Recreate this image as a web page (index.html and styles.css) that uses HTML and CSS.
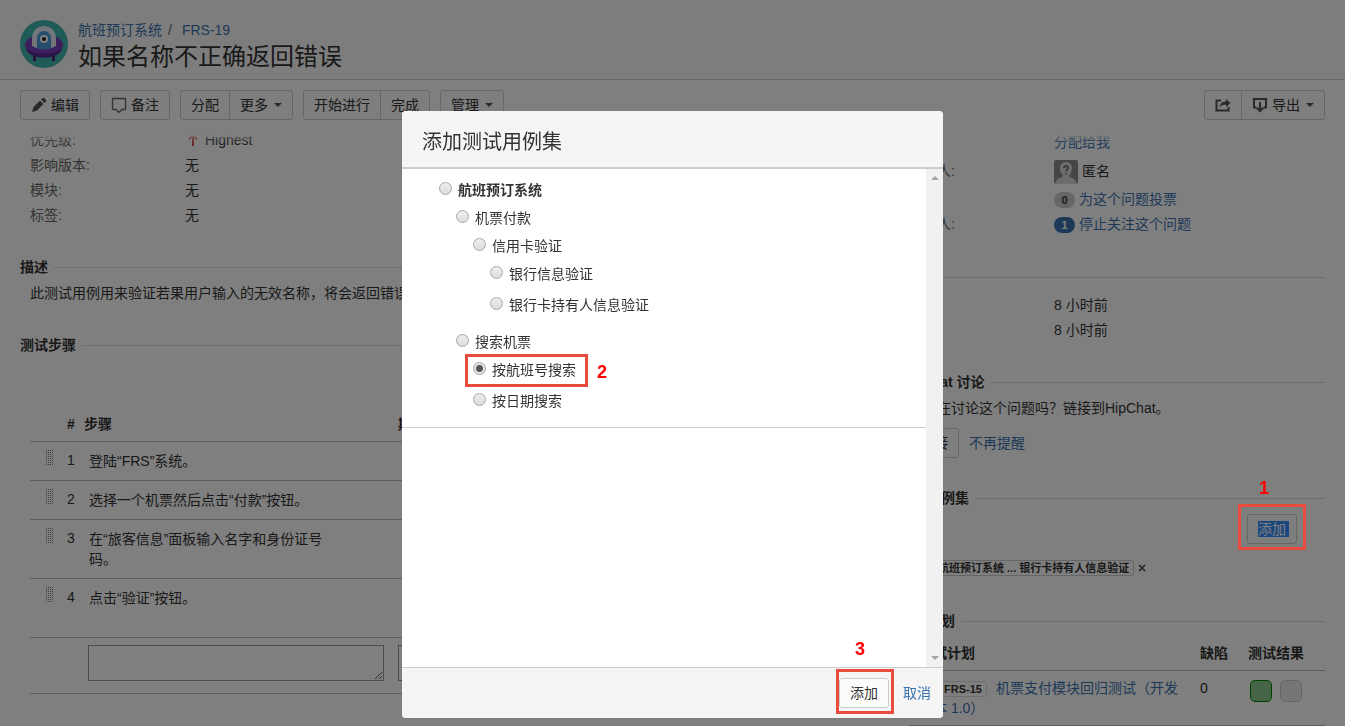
FILE: index.html
```html
<!DOCTYPE html>
<html lang="zh-CN">
<head>
  <meta charset="UTF-8" />
  <meta name="viewport" content="width=device-width, initial-scale=1.0"/>
  <title>FRS-19 如果名称不正确返回错误</title>
  <link rel="stylesheet" href="styles.css">
</head>
<body>

  <header class="issue-header">
    <svg class="project-avatar" viewBox="0 0 48 48" width="48" height="48">
      <circle cx="24" cy="24" r="24" fill="#3fb8b0"/>
      <path d="M13 35h3v6h-3zM32 35h3v6h-3z" fill="#4b2080"/>
      <ellipse cx="24" cy="25" rx="19" ry="10.500" fill="#7b3fc0"/>
      <path d="M5.500 28c3 13 34 13 37 0-6 7-31 7-37 0z" fill="#5a2896"/>
      <path d="M12 26V18a12 12 0 0 1 24 0v8c-5 4-19 4-24 0z" fill="#e4ecf4"/>
      <path d="M17 28V18a7 7 0 0 1 14 0v10c-4 2-10 2-14 0z" fill="#4f9bd8"/>
      <circle cx="24" cy="19" r="4" fill="#fff"/>
      <circle cx="24" cy="19" r="2" fill="#222"/>
    </svg>
    <div>
      <nav class="breadcrumbs"><a href="#">航班预订系统</a><span>/</span><a href="#">FRS-19</a></nav>
      <h1>如果名称不正确返回错误</h1>
    </div>
  </header>

  <div class="toolbar">
    <div class="btn-group">
      <button class="btn"><svg class="icon" viewBox="0 0 16 16" width="16" height="16"><path d="M1 15l1.500-5 6.500-6.500 3.500 3.500L6 13.500zM10 2.500l1.300-1.300q1-1 2 0l1.500 1.500q1 1 0 2L13.500 6z" fill="#555"/></svg>编辑</button>
    </div>
    <div class="btn-group">
      <button class="btn"><svg class="icon" viewBox="0 0 16 16" width="16" height="16"><path d="M2 1.500h12q.500 0 .5.500v10q0 .500-.5.500h-3l-3 3-3-3H2q-.500 0-.5-.500V2q0-.500.500-.500z" fill="none" stroke="#666" stroke-width="1.300"/></svg>备注</button>
    </div>
    <div class="btn-group">
      <button class="btn">分配</button>
      <button class="btn">更多<span class="caret"></span></button>
    </div>
    <div class="btn-group">
      <button class="btn">开始进行</button>
      <button class="btn">完成</button>
    </div>
    <div class="btn-group">
      <button class="btn">管理<span class="caret"></span></button>
    </div>
    <div class="btn-group push-right">
      <button class="btn" aria-label="分享"><svg viewBox="0 0 16 16" width="16" height="16"><path d="M6 3.500H1.500v10h12V10" fill="none" stroke="#555" stroke-width="2"/><path d="M4.500 10.500C5 6.500 7.500 4.500 11 4.500V2l4.500 4L11 10V7.500c-3 0-5 1-6.500 3z" fill="#555"/></svg></button>
      <button class="btn"><svg class="icon" viewBox="0 0 16 16" width="16" height="16"><path d="M4 10.500H2V2h12v8.500h-2" fill="none" stroke="#555" stroke-width="2"/><path d="M8 5v8M4.500 10.500L8 14l3.500-3.500" fill="none" stroke="#555" stroke-width="2"/></svg>导出<span class="caret"></span></button>
    </div>
  </div>

  <main class="issue-body">
    <div class="main-column">
      <dl class="fields">
        <dt>优先级:</dt>
        <dd><svg class="priority" viewBox="0 0 10 14" width="16" height="14"><path d="M5 13V2M1 6l4-4 4 4" fill="none" stroke="#d04437" stroke-width="2"/></svg>Highest</dd>
        <dt>影响版本:</dt><dd>无</dd>
        <dt>模块:</dt><dd>无</dd>
        <dt>标签:</dt><dd>无</dd>
      </dl>

      <section class="module">
        <h2>描述</h2>
        <p>此测试用例用来验证若果用户输入的无效名称，将会返回错误。</p>
      </section>

      <section class="module">
        <h2>测试步骤</h2>
        <table class="steps">
          <colgroup><col class="col-drag"><col class="col-num"><col class="col-step"><col></colgroup>
          <thead>
            <tr><th></th><th class="num">#</th><th>步骤</th><th class="expected">期望结果</th></tr>
          </thead>
          <tbody>
            <tr><td><span class="drag"></span></td><td class="num">1</td><td class="text"><p>登陆“FRS”系统。</p></td><td></td></tr>
            <tr><td><span class="drag"></span></td><td class="num">2</td><td class="text"><p>选择一个机票然后点击“付款”按钮。</p></td><td></td></tr>
            <tr><td><span class="drag"></span></td><td class="num">3</td><td class="text"><p>在“旅客信息”面板输入名字和身份证号码。</p></td><td></td></tr>
            <tr class="last-step"><td><span class="drag"></span></td><td class="num">4</td><td class="text"><p>点击“验证”按钮。</p></td><td></td></tr>
            <tr class="new-step"><td></td><td></td><td><textarea aria-label="步骤"></textarea></td><td><textarea aria-label="期望结果"></textarea></td></tr>
          </tbody>
        </table>
      </section>
    </div>

    <aside class="side-column">
      <dl class="people">
        <dt></dt><dd class="assign"><a href="#">分配给我</a></dd>
        <dt>报告人:</dt>
        <dd class="reporter">
          <svg viewBox="0 0 24 24" width="24" height="24">
            <rect width="24" height="24" rx="2" fill="#8c8c8c"/>
            <path d="M12 2c4 0 6 3 6 6 0 4-2 6-3 8 1 2 7 2 8 8H1c1-6 7-6 8-8-1-2-3-4-3-8 0-3 2-6 6-6z" fill="#d8d8d8"/>
            <path d="M10 8q0-2 2-2t2 2q0 1-1 1.600-1 .6-1 1.800M12 13v1.600" fill="none" stroke="#666" stroke-width="1.500"/>
          </svg>匿名
        </dd>
        <dt>投票:</dt><dd><span class="badge">0</span><a href="#">为这个问题投票</a></dd>
        <dt>关注人:</dt><dd><span class="badge active">1</span><a href="#">停止关注这个问题</a></dd>
      </dl>

      <section class="module">
        <h2>日期</h2>
        <dl class="people dates">
          <dt>创建:</dt><dd>8 小时前</dd>
          <dt>更新:</dt><dd>8 小时前</dd>
        </dl>
      </section>

      <section class="module">
        <h2>HipChat 讨论</h2>
        <p>您正在讨论这个问题吗？链接到HipChat。</p>
        <div class="actions"><button class="btn">连接</button><a href="#">不再提醒</a></div>
      </section>

      <section class="module">
        <h2>测试用例集</h2>
        <div class="add-suite">
          <div class="marked">
            <button class="btn"><span class="selected">添加</span></button>
            <span class="marker marker-1"><b>1</b></span>
          </div>
        </div>
        <div class="suite"><span class="suite-tag">航班预订系统 ... 银行卡持有人信息验证</span><button class="remove" aria-label="移除"><svg viewBox="0 0 8 8" width="8" height="8"><path d="M1 1l6 6M7 1L1 7" stroke="#444" stroke-width="1.500"/></svg></button></div>
      </section>

      <section class="module">
        <h2>测试计划</h2>
        <table class="plans">
          <colgroup><col><col class="col-defect"><col class="col-result"></colgroup>
          <thead><tr><th>测试计划</th><th>缺陷</th><th>测试结果</th></tr></thead>
          <tbody>
            <tr>
              <td><span class="plan-icon"></span><span class="key">FRS-15</span><a href="#">机票支付模块回归测试（开发版本 1.0）</a></td>
              <td>0</td>
              <td><div class="results"><span class="result pass"></span><span class="result"></span></div></td>
            </tr>
          </tbody>
        </table>
      </section>
    </aside>
  </main>

  <div class="blanket"></div>

  <!-- Add test suite dialog -->
  <div class="dialog-wrap">
    <form class="dialog" role="dialog" aria-labelledby="dialogTitle">
      <h2 id="dialogTitle">添加测试用例集</h2>
      <div class="dialog-content">
        <ul class="tree">
          <li>
            <label class="root"><input type="radio" name="suite">航班预订系统</label>
            <ul>
              <li>
                <label><input type="radio" name="suite">机票付款</label>
                <ul>
                  <li>
                    <label><input type="radio" name="suite">信用卡验证</label>
                    <ul class="leaves">
                      <li><label><input type="radio" name="suite">银行信息验证</label></li>
                      <li><label><input type="radio" name="suite">银行卡持有人信息验证</label></li>
                    </ul>
                  </li>
                </ul>
              </li>
              <li>
                <label><input type="radio" name="suite">搜索机票</label>
                <ul class="leaves">
                  <li><label class="marked"><input type="radio" name="suite" checked>按航班号搜索<span class="marker marker-2"><b>2</b></span></label></li>
                  <li><label><input type="radio" name="suite">按日期搜索</label></li>
                </ul>
              </li>
            </ul>
          </li>
        </ul>
        <div class="scrollbar"><span class="arrow up"></span><span class="arrow down"></span></div>
      </div>
      <div class="dialog-footer">
        <div class="marked">
          <button class="btn" type="button">添加</button>
          <span class="marker marker-3"><b>3</b></span>
        </div>
        <a href="#">取消</a>
      </div>
    </form>
  </div>

</body>
</html>
```
FILE: styles.css
```css
* { box-sizing: border-box; margin: 0; padding: 0; }

body {
  height: 100vh;
  display: flex;
  flex-direction: column;
  overflow: hidden;
  background: #fff;
  color: #333;
  font-family: "Liberation Sans", "Noto Sans CJK SC", sans-serif;
  font-size: 14px;
  line-height: 20px;
}

a { color: #3b73af; text-decoration: none; }
ul { list-style: none; }
button, input, textarea { font: inherit; color: inherit; }

/* Header */
.issue-header {
  display: flex;
  gap: 10px;
  padding: 20px 20px 11px;
  background: #fafafa;
  border-bottom: 1px solid #ccc;
}

.breadcrumbs span { margin: 0 10px 0 6px; color: #666; }

.issue-header h1 {
  font-size: 24px;
  font-weight: normal;
  line-height: 28px;
  margin-top: 3px;
  height: 25px;
}

.issue-header svg { flex: none; }

/* Toolbar */
.toolbar {
  display: flex;
  gap: 10px;
  padding: 10px 20px 8px;
  background: #fff;
  position: relative;
}

.toolbar::after {
  content: "";
  position: absolute;
  left: 0;
  right: 0;
  top: 100%;
  height: 18px;
  background: linear-gradient(#fff 40%, rgba(255, 255, 255, 0.3) 60%, rgba(255, 255, 255, 0));
}

.btn-group { display: flex; }
.push-right { margin-left: auto; }

.btn {
  height: 30px;
  padding: 0 10px;
  border: 1px solid #ccc;
  border-radius: 3px;
  background: #fcfcfc;
  display: inline-flex;
  align-items: center;
  white-space: nowrap;
  cursor: pointer;
}

.btn:hover { border-color: #999; }
.btn .icon { margin-right: 4px; }
.btn-group .btn + .btn { margin-left: -1px; border-radius: 0 3px 3px 0; }
.btn-group .btn:first-child:not(:last-child) { border-radius: 3px 0 0 3px; }

.caret {
  margin-left: 6px;
  border: 4px solid transparent;
  border-top-color: #555;
  border-bottom: 0;
}

/* Issue body */
.issue-body {
  flex: 1;
  min-height: 0;
  overflow: hidden;
  display: grid;
  grid-template-columns: 2fr 1fr;
  gap: 27px;
  padding: 0 20px;
}

.main-column, .side-column { min-width: 0; }

.fields {
  display: grid;
  grid-template-columns: 155px 1fr;
  padding-left: 10px;
  line-height: 25px;
}

.fields dt, .people dt { color: #666; }
.priority { vertical-align: -2px; margin-right: 4px; }

.module { margin-top: 30px; }
.main-column .module { margin-top: 29px; }
.main-column .module + .module { margin-top: 32px; }

.module h2 {
  display: flex;
  align-items: center;
  gap: 6px;
  font-size: 14px;
  line-height: 20px;
}

.module h2::after {
  content: "";
  flex: 1;
  border-top: 1px solid #ddd;
}

.module > p { padding: 6px 0 0 10px; }

/* Step table */
table { border-collapse: collapse; table-layout: fixed; }
th { text-align: left; }
td { vertical-align: top; }

.steps {
  width: calc(100% - 10px);
  margin: 53px 0 0 10px;
}

.col-drag { width: 32px; }
.col-num { width: 22px; }
.col-step { width: 310px; }
.steps tr { border-bottom: 1px solid #bbb; }
.steps th { padding: 6px 0 7px; }
.steps th.expected { padding-left: 4px; }
.steps td { padding: 8px 0 9px; }
.steps th.num, .steps td.num { padding-left: 5px; }
.steps td.text { padding-left: 5px; }
.steps td.text p { max-width: 250px; padding-top: 1px; }
.steps .last-step td { padding-bottom: 29px; }
.steps .new-step td { padding: 7px 10px 12px 4px; }

.drag {
  display: block;
  width: 9px;
  height: 16px;
  margin-left: 15px;
  background: repeating-conic-gradient(#777 0 25%, transparent 0 100%) 0 0 / 2px 2px;
}

.steps textarea {
  display: block;
  width: 100%;
  height: 36px;
  border: 1px solid #999;
  background: #fff;
}

/* Side column */
.people {
  display: grid;
  grid-template-columns: 145px 1fr;
  padding-left: 10px;
  line-height: 25px;
}

.people .assign { line-height: 28px; }
.people .reporter, .people dt:nth-of-type(2) { line-height: 31px; }
.reporter { display: flex; align-items: center; gap: 4px; }
.dates { padding-top: 6px; }
.people.dates dt { line-height: 25px; }
.dates + .module, .side-column .module:nth-of-type(2) { margin-top: 29px; }

.badge {
  display: inline-block;
  width: 21px;
  margin-right: 4px;
  border-radius: 8px;
  background: #ccc;
  font-size: 11px;
  font-weight: bold;
  line-height: 16px;
  text-align: center;
}

.badge.active { background: #3b73af; color: #fff; }

.actions {
  display: flex;
  align-items: center;
  gap: 10px;
  padding: 10px 0 0 10px;
}

.add-suite {
  display: flex;
  justify-content: flex-end;
  padding: 6px 28px 0 0;
}

.selected { background: #3390ff; color: #fff; line-height: 16px; padding-right: 3px; margin-right: -3px; }

.suite {
  display: flex;
  align-items: center;
  gap: 4px;
  padding: 16px 0 0 10px;
}

.suite-tag {
  padding: 0 4px;
  margin-left: 24px;
  border: 1px solid #ccc;
  border-radius: 3px;
  font-size: 11px;
  font-weight: bold;
  line-height: 14px;
  white-space: nowrap;
}

.remove { border: 0; background: none; display: flex; cursor: pointer; }

.side-column .module:last-child { margin-top: 35px; }

.plans {
  width: calc(100% - 10px);
  margin: 12px 0 0 10px;
}

.col-defect { width: 48px; }
.col-result { width: 77px; }
.plans tr { border-bottom: 1px solid #bbb; }
.plans th { padding-bottom: 7px; }
.plans td { padding: 7px 0; }
.plans th:first-child, .plans td:first-child { padding-left: 10px; }
.plans td:first-child { padding-right: 15px; }
.plan-icon { display: inline-block; width: 16px; height: 12px; margin-right: 4px; background: #3b73af; border-radius: 2px; }

.key {
  display: inline-block;
  padding: 0 4px;
  margin-right: 9px;
  border: 1px solid #ddd;
  border-radius: 3px;
  font-size: 11px;
  font-weight: bold;
  line-height: 14px;
}

.results { display: flex; gap: 8px; padding: 2px 0 0 2px; }
.result { width: 22px; height: 22px; border: 1px solid #ccc; border-radius: 5px; background: #ececec; }
.result.pass { border-color: #008000; background: #8cc98c; }

/* Dialog */
.blanket {
  position: fixed;
  inset: 0;
  z-index: 10;
  background: rgba(0, 0, 0, 0.5);
}

.dialog-wrap {
  position: fixed;
  inset: 0;
  z-index: 20;
  display: flex;
  justify-content: center;
  padding: 111px 20px 8px;
}

.dialog {
  width: 100%;
  max-width: 541px;
  display: flex;
  flex-direction: column;
  overflow: hidden;
  border-radius: 4px;
  background: #fff;
}

.dialog h2 {
  padding: 19px 20px 13px;
  background: #f5f5f5;
  border-bottom: 2px solid #ccc;
  font-size: 20px;
  font-weight: normal;
  line-height: 24px;
}

.dialog-content { flex: 1; min-height: 0; display: flex; }

.tree {
  flex: 1;
  align-self: flex-start;
  padding: 7px 0 3px 37px;
  border-bottom: 1px solid #ccc;
}

.tree ul { padding-left: 17px; }
.tree .leaves { padding-bottom: 6px; }
.leaves li { padding-bottom: 3px; }

.tree li { display: flex; flex-direction: column; align-items: flex-start; }

.tree label {
  display: flex;
  align-items: center;
  gap: 6px;
  line-height: 28px;
}

.tree .root { font-weight: bold; }

.tree input {
  appearance: none;
  width: 13px;
  height: 13px;
  margin-bottom: 3px;
  border: 1px solid #a8a8a8;
  border-radius: 50%;
  background: linear-gradient(#eee, #dcdcdc);
}

.tree input:checked {
  background: radial-gradient(circle, #555 0 3px, #e4e4e4 4px);
}

.scrollbar {
  width: 17px;
  padding: 7px 0;
  background: #f1f1f1;
  display: flex;
  flex-direction: column;
  justify-content: space-between;
  align-items: center;
}

.arrow { border: 4px solid transparent; }
.arrow.up { border-top: 0; border-bottom-color: #a3a3a3; }
.arrow.down { border-bottom: 0; border-top-color: #a3a3a3; }

.dialog-footer {
  display: flex;
  justify-content: flex-end;
  align-items: center;
  gap: 14px;
  padding: 10px 12px;
  background: #f5f5f5;
  border-top: 1px solid #ccc;
}

/* Numbered step callouts */
.marked { position: relative; display: flex; }

.marker {
  position: absolute;
  z-index: 15;
  border: 3px solid #e94b3f;
  pointer-events: none;
}

.marker b {
  position: absolute;
  color: #f00;
  font-size: 18px;
  line-height: 20px;
}

.marker-1 { inset: -10px -9px -6px; }
.marker-1 b { left: 18px; bottom: 49px; }
.marker-2 { inset: -2px -12px -3px -8px; }
.marker-2 b { left: 129px; top: 5px; }
.marker-3 { inset: -9px -5px -6px -3px; }
.marker-3 b { left: 16px; bottom: 52px; }
```
